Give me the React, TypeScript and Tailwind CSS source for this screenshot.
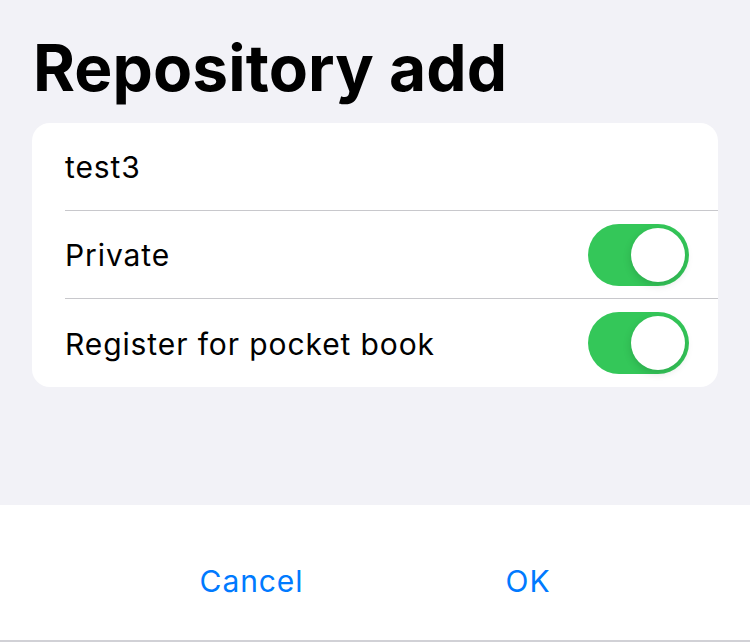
import React, { useState } from 'react';

const Toggle = ({ on, onChange }: { on: boolean; onChange: () => void }) => (
  <button
    onClick={onChange}
    className={`relative h-[62px] w-[101px] shrink-0 rounded-full transition-colors ${on ? 'bg-[#34c759]' : 'bg-[#e9e9eb]'}`}
  >
    <span
      className={`absolute top-[4px] h-[54px] w-[54px] rounded-full bg-white shadow-[0_3px_8px_rgba(0,0,0,0.15)] transition-all ${on ? 'left-[43px]' : 'left-[4px]'}`}
    />
  </button>
);

const App = () => {
  const [isPrivate, setIsPrivate] = useState(true);
  const [pocketBook, setPocketBook] = useState(true);

  return (
    <div className="flex h-[642px] w-[750px] flex-col bg-[#f2f2f7] font-['Inter',sans-serif] text-black">
      <div className="flex-1 px-[32px]">
        <h1 className="pt-[30px] pl-[1px] text-[64px] leading-[76px] font-bold tracking-[0.1px]">
          Repository add
        </h1>

        <div className="mt-[17px] overflow-hidden rounded-[18px] bg-white text-[30px] tracking-[0.9px]">
          <div className="flex h-[87px] items-center pt-[2px] pl-[33px]">test3</div>
          <div className="ml-[33px] h-px bg-[#c8c8cc]" />
          <div className="flex h-[87px] items-center justify-between pr-[29px] pl-[33px]">
            <span className="pt-[2px]">Private</span>
            <Toggle on={isPrivate} onChange={() => setIsPrivate(!isPrivate)} />
          </div>
          <div className="ml-[33px] h-px bg-[#c8c8cc]" />
          <div className="flex h-[88px] items-center justify-between pr-[29px] pl-[33px]">
            <span className="pt-[2px]">Register for pocket book</span>
            <Toggle on={pocketBook} onChange={() => setPocketBook(!pocketBook)} />
          </div>
        </div>
      </div>

      <div className="flex h-[137px] flex-col bg-white">
        <div className="flex flex-1 items-center pt-[18px] text-[30px] tracking-[0.9px] text-[#007aff]">
          <div className="flex w-[502px] justify-center pl-[1px]">
            <button>Cancel</button>
          </div>
          <div className="flex w-[52px] justify-center">
            <button>OK</button>
          </div>
        </div>
        <div className="h-[2px] bg-[#d1d1d6]" />
      </div>
    </div>
  );
};

export default App;
